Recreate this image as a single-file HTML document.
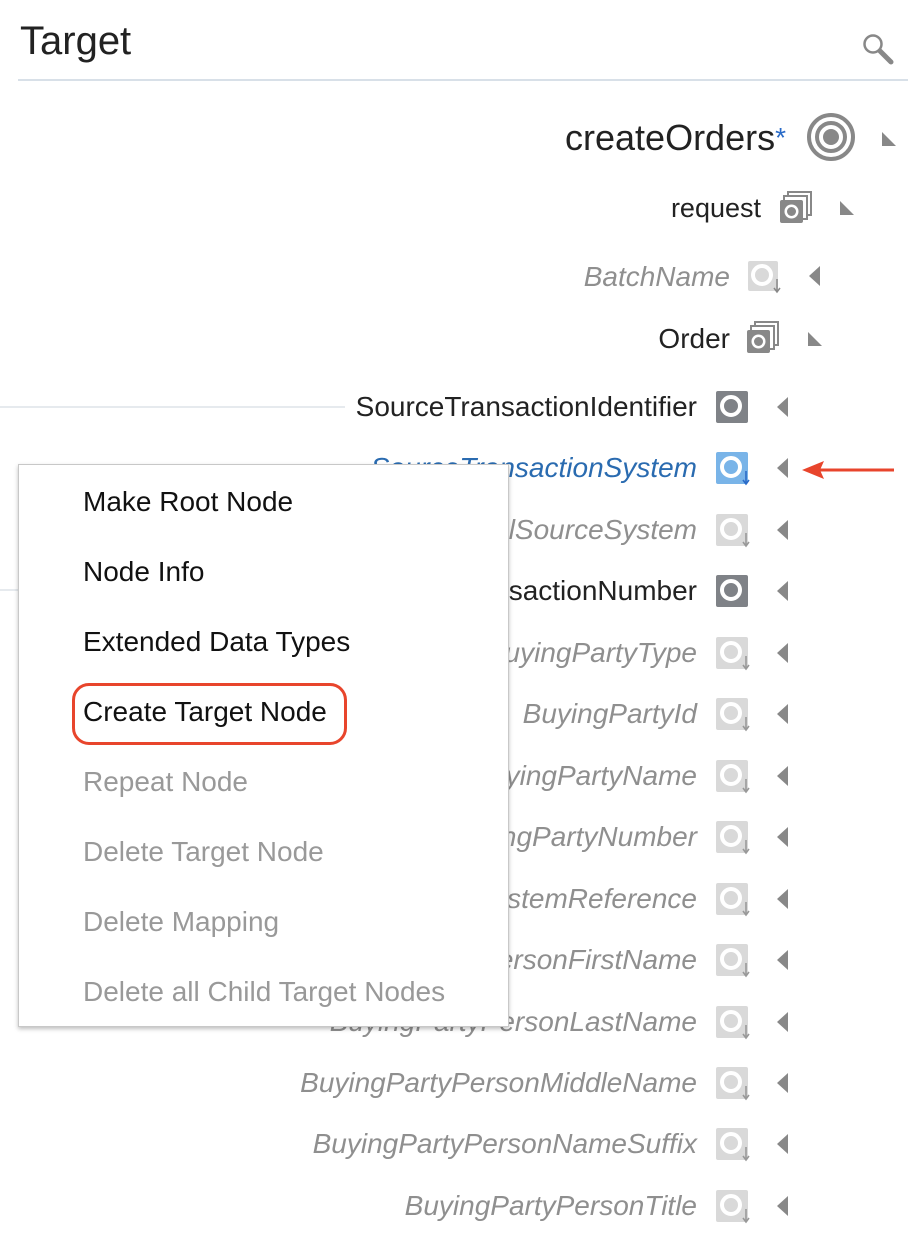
<!DOCTYPE html>
<html><head><meta charset="utf-8"><style>
body{margin:0;width:908px;height:1234px;background:#fff;position:relative;overflow:hidden;font-family:"Liberation Sans",Arial,sans-serif}
.a{position:absolute}
.lbl{position:absolute;white-space:nowrap;text-align:right;font-size:28px;line-height:32px}
.it{font-style:italic;color:#8f8f8f}
.dk{color:#222}
.mi{position:absolute;left:83px;font-size:28px;line-height:32px;white-space:nowrap}
</style></head><body>
<div class="a" style="left:20px;top:18px;font-size:40px;color:#222;line-height:46px">Target</div>
<svg class="a" style="left:860px;top:30px" width="40" height="40"><circle cx="13" cy="14" r="8.5" fill="none" stroke="#888" stroke-width="2.5"/><line x1="20" y1="21" x2="31" y2="32" stroke="#888" stroke-width="5" stroke-linecap="round"/></svg>
<div class="a" style="left:18px;top:79px;width:890px;height:2px;background:#d8e0e8"></div>

<div class="a" style="left:0;top:406px;width:345px;height:2px;background:#e6eaee"></div>
<div class="a" style="left:0;top:589px;width:30px;height:2px;background:#e6eaee"></div>

<div class="lbl dk" style="right:122px;top:118px;font-size:36px;line-height:40px">createOrders<span style="color:#2a6bc8;font-size:28px;vertical-align:top">*</span></div>
<svg class="a" style="left:806px;top:112px" width="50" height="50"><circle cx="25" cy="25" r="22" fill="none" stroke="#888" stroke-width="4"/><circle cx="25" cy="25" r="14" fill="none" stroke="#888" stroke-width="4"/><circle cx="25" cy="25" r="8" fill="#888"/></svg>
<svg class="a" style="left:880px;top:130px" width="18" height="18"><path d="M2 2L16 16H2Z" fill="#888"/></svg>

<div class="lbl dk" style="right:147px;top:192px;font-size:27px">request</div>
<svg class="a" style="left:778px;top:190px" width="36" height="36"><rect x="10" y="2" width="23" height="23" fill="none" stroke="#888" stroke-width="2"/><rect x="6" y="6" width="23" height="23" fill="#fff" stroke="#888" stroke-width="2"/><rect x="2" y="10" width="23" height="23" rx="2" fill="#888"/><circle cx="13.5" cy="21.5" r="7" fill="#fff"/><circle cx="13.5" cy="21.5" r="4.5" fill="#888"/></svg>
<svg class="a" style="left:838px;top:199px" width="18" height="18"><path d="M2 2L16 16H2Z" fill="#888"/></svg>

<div class="lbl it" style="right:178px;top:261px">BatchName</div>
<svg class="a" style="left:747px;top:260px" width="36" height="36"><rect x="1" y="1" width="30" height="30" rx="2" fill="#d9d9d9"/><circle cx="15" cy="15" r="9" fill="none" stroke="#fff" stroke-width="4"/><path d="M30 19v13M27 28l3 4 3-4" stroke="#888" stroke-width="1.5" fill="none"/></svg>
<svg class="a" style="left:806px;top:264px" width="16" height="24"><path d="M14 2L3 12L14 22Z" fill="#888"/></svg>

<div class="lbl dk" style="right:178px;top:323px">Order</div>
<svg class="a" style="left:745px;top:320px" width="36" height="36"><rect x="10" y="2" width="23" height="23" fill="none" stroke="#888" stroke-width="2"/><rect x="6" y="6" width="23" height="23" fill="#fff" stroke="#888" stroke-width="2"/><rect x="2" y="10" width="23" height="23" rx="2" fill="#888"/><circle cx="13.5" cy="21.5" r="7" fill="#fff"/><circle cx="13.5" cy="21.5" r="4.5" fill="#888"/></svg>
<svg class="a" style="left:806px;top:330px" width="18" height="18"><path d="M2 2L16 16H2Z" fill="#888"/></svg>

<div id="rows"></div>
<script>
var rows=[["SourceTransactionIdentifier","d"],["SourceTransactionSystem","b"],["OriginalSourceSystem","g"],["SourceTransactionNumber","d"],["BuyingPartyType","g"],["BuyingPartyId","g"],["BuyingPartyName","g"],["BuyingPartyNumber","g"],["BuyingPartySystemReference","g"],["BuyingPartyPersonFirstName","g"],["BuyingPartyPersonLastName","g"],["BuyingPartyPersonMiddleName","g"],["BuyingPartyPersonNameSuffix","g"],["BuyingPartyPersonTitle","g"]];
var h="";
rows.forEach(function(r,i){var c=407+i*61.45;var t=r[1];
var st=t=="d"?"color:#222":t=="b"?"font-style:italic;color:#2a6bb0":"font-style:italic;color:#8f8f8f";
h+='<div class="lbl" style="right:211px;top:'+(c-16)+'px;'+st+'">'+r[0]+'</div>';
var bg=t=="d"?"#7f8287":t=="b"?"#79b4e8":"#d9d9d9";
var ar=t=="b"?"#2a6bc8":"#999";
h+='<svg class="a" style="left:715px;top:'+(c-17)+'px" width="36" height="36"><rect x="1" y="1" width="32" height="32" rx="2" fill="'+bg+'"/><circle cx="16" cy="16" r="9" fill="none" stroke="#fff" stroke-width="4"/>'+(t=="d"?'':'<path d="M31 20v13M28 29l3 4 3-4" stroke="'+ar+'" stroke-width="1.6" fill="none"/>')+'</svg>';
h+='<svg class="a" style="left:774px;top:'+(c-12)+'px" width="16" height="24"><path d="M14 2L3 12L14 22Z" fill="#888"/></svg>';});
document.getElementById("rows").innerHTML=h;
</script>
<svg class="a" style="left:800px;top:458px" width="100" height="24"><path d="M94 12H20" stroke="#e8452c" stroke-width="3"/><path d="M2 12L24 3L20 12L24 21Z" fill="#e8452c"/></svg>

<div class="a" style="left:18px;top:464px;width:489px;height:561px;background:#fff;border:1px solid #c8c8c8;box-shadow:0 2px 4px rgba(0,0,0,0.25)"></div>
<div class="mi" style="top:486px;color:#111">Make Root Node</div>
<div class="mi" style="top:556px;color:#111">Node Info</div>
<div class="mi" style="top:626px;color:#111">Extended Data Types</div>
<div class="mi" style="top:696px;color:#111">Create Target Node</div>
<div class="a" style="left:72px;top:683px;width:269px;height:56px;border:3px solid #e8452c;border-radius:17px"></div>
<div class="mi" style="top:766px;color:#999">Repeat Node</div>
<div class="mi" style="top:836px;color:#999">Delete Target Node</div>
<div class="mi" style="top:906px;color:#999">Delete Mapping</div>
<div class="mi" style="top:976px;color:#999">Delete all Child Target Nodes</div>
</body></html>
